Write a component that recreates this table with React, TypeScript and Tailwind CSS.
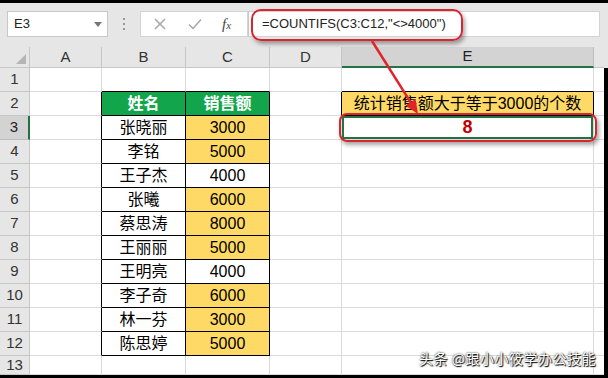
import React from "react";

const names: [string, number][] = [
  ["张晓丽", 3000],
  ["李铭", 5000],
  ["王子杰", 4000],
  ["张曦", 6000],
  ["蔡思涛", 8000],
  ["王丽丽", 5000],
  ["王明亮", 4000],
  ["李子奇", 6000],
  ["林一芬", 3000],
  ["陈思婷", 5000],
];

const cols = ["A", "B", "C", "D", "E"];
const rowNums = [1, 2, 3, 4, 5, 6, 7, 8, 9, 10, 11, 12, 13];

const cjk = "font-['Liberation_Sans','Noto_Sans_CJK_SC',sans-serif]";

const base = "border-r border-b border-[#dadada] bg-white flex items-center justify-center";

function cellFor(r: number, c: string) {
  // r is sheet row number, c column letter
  if (c === "A") {
    return { cls: r >= 2 && r <= 12 ? `${base} border-r-black` : base, content: null };
  }
  if (c === "B" || c === "C") {
    if (r === 1) return { cls: `${base} border-b-black`, content: null };
    if (r === 2)
      return {
        cls: "border-r border-b border-black bg-[#13a54b] flex items-center justify-center text-white font-bold text-[16px]",
        content: c === "B" ? "姓名" : "销售额",
      };
    if (r <= 12) {
      const [name, amount] = names[r - 3];
      if (c === "B")
        return { cls: `${base} border-r-black border-b-black text-[16px] text-black`, content: name };
      return {
        cls:
          amount === 4000
            ? `${base} border-r-black border-b-black text-[16px] text-black`
            : "border-r border-b border-black bg-[#ffd966] flex items-center justify-center text-[16px] text-black",
        content: String(amount),
      };
    }
    return { cls: base, content: null };
  }
  if (c === "D") {
    return { cls: r === 2 ? `${base} border-r-black` : base, content: null };
  }
  // E
  if (r === 1) return { cls: `${base} border-b-black`, content: null };
  if (r === 2)
    return {
      cls: "border-r border-b border-black bg-[#ffd966] flex items-center justify-center text-[16px] text-black",
      content: "统计销售额大于等于3000的个数",
    };
  if (r === 3)
    return {
      cls: `${base} shadow-[inset_0_0_0_2px_#217346] text-[18px] font-bold text-[#c00000]`,
      content: "8",
    };
  return { cls: base, content: null };
}

export default function App() {
  return (
    <div className={`relative w-[608px] h-[378px] bg-black pt-[3px] pb-[3px] flex flex-col overflow-hidden ${cjk}`}>
      {/* formula bar */}
      <div className="h-[44px] bg-[#e6e6e6] flex items-center pl-[7px] pr-[8px] pb-[2px]">
        <div className="w-[101px] h-[26px] bg-white border border-[#c8c8c8] flex items-center justify-between pl-[6px] pr-[5px]">
          <span className="text-[13px] text-[#222]">E3</span>
          <svg width="8" height="5" viewBox="0 0 8 5">
            <polygon points="0,0 8,0 4,5" fill="#777" />
          </svg>
        </div>
        <div className="w-[32px] flex flex-col items-center gap-[3px]">
          <div className="w-[2px] h-[2px] bg-[#999]" />
          <div className="w-[2px] h-[2px] bg-[#999]" />
          <div className="w-[2px] h-[2px] bg-[#999]" />
        </div>
        <div className="w-[108px] h-[26px] bg-white border border-[#d4d4d4] flex items-center pl-[13px]">
          <svg width="12" height="12" viewBox="0 0 12 12" className="mr-[22px]">
            <path d="M1 1 L11 11 M11 1 L1 11" stroke="#a6a6a6" strokeWidth="1.5" />
          </svg>
          <svg width="14" height="12" viewBox="0 0 14 12" className="mr-[20px]">
            <path d="M1 6.5 L5 10.5 L13 1.5" stroke="#a6a6a6" strokeWidth="1.5" fill="none" />
          </svg>
          <span className="font-['Liberation_Serif',serif] italic text-[15px] text-[#444] leading-none">
            f<span className="text-[11px]">x</span>
          </span>
        </div>
        <div className="flex-1 h-[26px] bg-white border border-[#d4d4d4] border-l-[#c8c8c8] flex items-center pl-[13px]">
          <span className="font-['Liberation_Sans',sans-serif] text-[13px] text-[#222]">
            =COUNTIFS(C3:C12,"&lt;&gt;4000")
          </span>
        </div>
      </div>

      {/* sheet */}
      <div className="flex flex-1 min-h-0">
        <div className="grid grid-cols-[30px_72px_84px_84px_72px_252px_10px] grid-rows-[21px_repeat(12,24px)_19px] overflow-hidden">
          {/* header row */}
          <div className="bg-[#e6e6e6] border-r border-b border-[#c6c6c6] flex items-end justify-end pr-[3px] pb-[3px]">
            <svg width="10" height="10" viewBox="0 0 10 10">
              <polygon points="10,0 10,10 0,10" fill="#b5b5b5" />
            </svg>
          </div>
          {cols.map((c) =>
            c === "E" ? (
              <div
                key={c}
                className="bg-[#d3d3d3] border-r border-[#bdbdbd] border-b-2 border-b-[#217346] flex items-center justify-center text-[15px] text-[#222] font-['Liberation_Sans',sans-serif]"
              >
                {c}
              </div>
            ) : (
              <div
                key={c}
                className="bg-[#e6e6e6] border-r border-b border-[#c6c6c6] flex items-center justify-center text-[15px] text-[#333] font-['Liberation_Sans',sans-serif]"
              >
                {c}
              </div>
            )
          )}
          <div className="bg-[#e6e6e6] border-b border-[#c6c6c6]" />

          {rowNums.map((r) => (
            <React.Fragment key={r}>
              {r === 3 ? (
                <div className="bg-[#d3d3d3] border-b border-[#bdbdbd] border-r-2 border-r-[#217346] flex items-center justify-center text-[15px] text-[#222] font-['Liberation_Sans',sans-serif]">
                  {r}
                </div>
              ) : (
                <div className="bg-[#e6e6e6] border-r border-b border-[#c6c6c6] flex items-center justify-center text-[15px] text-[#333] font-['Liberation_Sans',sans-serif]">
                  {r}
                </div>
              )}
              {cols.map((c) => {
                const cell = cellFor(r, c);
                return (
                  <div key={c} className={cell.cls}>
                    {cell.content}
                  </div>
                );
              })}
              <div className="bg-white border-b border-[#dadada]" />
            </React.Fragment>
          ))}
        </div>
        <div className="flex-1 flex flex-col">
          <div className="h-[21px] bg-[#e6e6e6]" />
          <div className="flex-1 bg-black" />
        </div>
      </div>

      {/* annotations */}
      <div className="absolute left-[251px] top-[9px] w-[212px] h-[32px] rounded-[10px] border-[2.5px] border-[#d9252d] shadow-[2px_3px_4px_rgba(0,0,0,0.35)] pointer-events-none" />
      <div className="absolute left-[339px] top-[113px] w-[258px] h-[29px] rounded-[8px] border-[2.5px] border-[#d9252d] shadow-[2px_3px_4px_rgba(0,0,0,0.35)] pointer-events-none" />
      <svg className="absolute left-0 top-0 pointer-events-none" width="608" height="378" viewBox="0 0 608 378">
        <line x1="372" y1="41" x2="410.5" y2="102.2" stroke="#e0242b" strokeWidth="2.5" />
        <polygon points="418,114 405.4,105.4 415.6,99" fill="#e0242b" />
      </svg>
      <div className="absolute right-[12px] bottom-[9px] text-[14px] text-white tracking-[0.5px] [text-shadow:0_0_2px_#000,1px_1px_1px_#000] font-['Noto_Sans_CJK_SC',sans-serif]">
        头条 @跟小小筱学办公技能
      </div>
    </div>
  );
}
